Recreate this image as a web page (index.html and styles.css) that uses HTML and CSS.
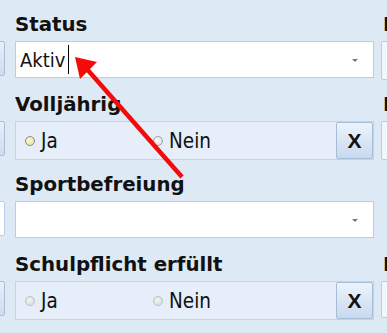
FILE: index.html
```html
<!DOCTYPE html>
<html lang="de">
<head>
  <meta charset="UTF-8" />
  <meta name="viewport" content="width=device-width, initial-scale=1.0" />
  <title>Schülerdaten</title>
  <link rel="stylesheet" href="styles.css">
</head>
<body>
  <div class="sheet">
    <div class="col col-left">
      <div class="field"><div class="label">&nbsp;</div><div class="edge edge-btn"></div></div>
      <div class="field"><div class="label">&nbsp;</div><div class="edge edge-btn"></div></div>
      <div class="field"><div class="label">&nbsp;</div><div class="edge edge-white"></div></div>
      <div class="field"><div class="label">&nbsp;</div><div class="edge edge-btn"></div></div>
    </div>

    <div class="col col-main">
      <div class="field">
        <div class="label">Status</div>
        <div class="combo">
          <span class="value">Aktiv</span><span class="caret"></span>
          <span class="arrow"></span>
        </div>
      </div>

      <div class="field">
        <div class="label">Volljährig</div>
        <div class="radios">
          <label class="radio"><span class="dot dot-hover"></span>Ja</label>
          <label class="radio"><span class="dot"></span>Nein</label>
          <button class="clear">X</button>
        </div>
      </div>

      <div class="field">
        <div class="label">Sportbefreiung</div>
        <div class="combo">
          <span class="value"></span>
          <span class="arrow"></span>
        </div>
      </div>

      <div class="field">
        <div class="label">Schulpflicht erfüllt</div>
        <div class="radios">
          <label class="radio"><span class="dot dot-off"></span>Ja</label>
          <label class="radio"><span class="dot dot-off"></span>Nein</label>
          <button class="clear">X</button>
        </div>
      </div>
    </div>

    <div class="col col-right">
      <div class="field"><div class="label">Klasse</div><div class="edge edge-plain"></div></div>
      <div class="field"><div class="label">Nachname</div><div class="edge edge-plain"></div></div>
      <div class="field"><div class="label">&nbsp;</div></div>
      <div class="field"><div class="label">Herkunft</div><div class="edge edge-plain short"></div></div>
    </div>
  </div>

  <svg class="pointer" width="387" height="333" viewBox="0 0 387 333">
    <line x1="86" y1="68" x2="182" y2="177" stroke="#f50a0a" stroke-width="4.5" />
    <polygon points="75,57 97,62 80,79" fill="#f50a0a" />
  </svg>
</body>
</html>
```

FILE: styles.css
```css
:root {
  --bg: #dee9f6;
  --panel: #e5eef9;
  --border: #b8cee7;
  --panel-border: #c3d4e7;
  --text: #111;
}
html, body {
  margin: 0;
  padding: 0;
  width: 387px;
  height: 333px;
  overflow: hidden;
  background: var(--bg);
}
.sheet {
  display: flex;
  margin-left: -35px;
}
.col-left {
  width: 40px;
  flex-shrink: 0;
  margin-right: 10px;
}
.col-main {
  width: 359px;
  flex-shrink: 0;
  margin-right: 7px;
}
.col-right {
  width: 200px;
  flex-shrink: 0;
}
.field {
  height: 80px;
  box-sizing: border-box;
  padding-top: 13px;
}
.label {
  font-family: "DejaVu Sans", Verdana, sans-serif;
  font-weight: bold;
  font-size: 19.8px;
  line-height: 23px;
  height: 23px;
  margin: 0 0 5px 0;
  color: var(--text);
  white-space: nowrap;
  overflow: hidden;
}
.col-right .label {
  padding-left: 2px;
}
.combo {
  height: 37px;
  box-sizing: border-box;
  border: 1px solid var(--border);
  background: #fff;
  display: flex;
  align-items: center;
  padding: 0 15px 0 4px;
  font-family: "DejaVu Sans Condensed", "Liberation Sans", sans-serif;
  font-size: 20px;
  color: var(--text);
}
.caret {
  width: 1px;
  height: 29px;
  background: #000;
  margin-left: 3px;
}
.arrow {
  margin-left: auto;
  width: 0;
  height: 0;
  border-left: 3px solid transparent;
  border-right: 3px solid transparent;
  border-top: 3px solid #6f7a86;
  margin-top: 1px;
}
.radios {
  height: 39px;
  box-sizing: border-box;
  border: 1px solid var(--panel-border);
  background: var(--panel);
  display: flex;
  align-items: center;
  padding-left: 9px;
  font-family: "DejaVu Sans Condensed", "Liberation Sans", sans-serif;
  font-size: 20.5px;
  color: var(--text);
}
.radio {
  display: flex;
  align-items: center;
  gap: 6px;
  width: 128px;
}
.radio + .radio {
  width: auto;
}
.dot {
  width: 10px;
  height: 10px;
  box-sizing: border-box;
  border-radius: 50%;
  border: 1px solid #9ca2a8;
  background: radial-gradient(circle at 40% 40%, #fbfbfb, #d3d6da);
}
.dot-hover {
  border-color: #858b92;
  background: radial-gradient(circle at 40% 40%, #fff8d8, #eed98a);
}
.dot-off {
  border-color: #bcc1c6;
  background: radial-gradient(circle at 40% 40%, #f2f2f2, #d6d6d6);
}
.clear {
  margin-left: auto;
  width: 37px;
  height: 37px;
  border: 1px solid #a7bcd6;
  border-radius: 2px;
  background: linear-gradient(#edf3fb, #c9d9ee);
  font-family: "Liberation Sans", Arial, sans-serif;
  font-weight: bold;
  font-size: 21px;
  color: #111;
  padding: 0;
  cursor: pointer;
}
.edge {
  height: 35px;
  box-sizing: border-box;
  border-radius: 2px;
}
.edge-btn {
  border: 1px solid #a9bed6;
  background: linear-gradient(#e8f0fa, #cddcef);
}
.edge-white {
  border: 1px solid var(--border);
  background: #fff;
}
.edge-plain {
  height: 39px;
  border: 1px solid #c2cbd6;
  background: #f3f7fb;
}
.edge-plain.short {
  height: 37px;
}
.pointer {
  position: absolute;
  left: 0;
  top: 0;
  pointer-events: none;
}
```
